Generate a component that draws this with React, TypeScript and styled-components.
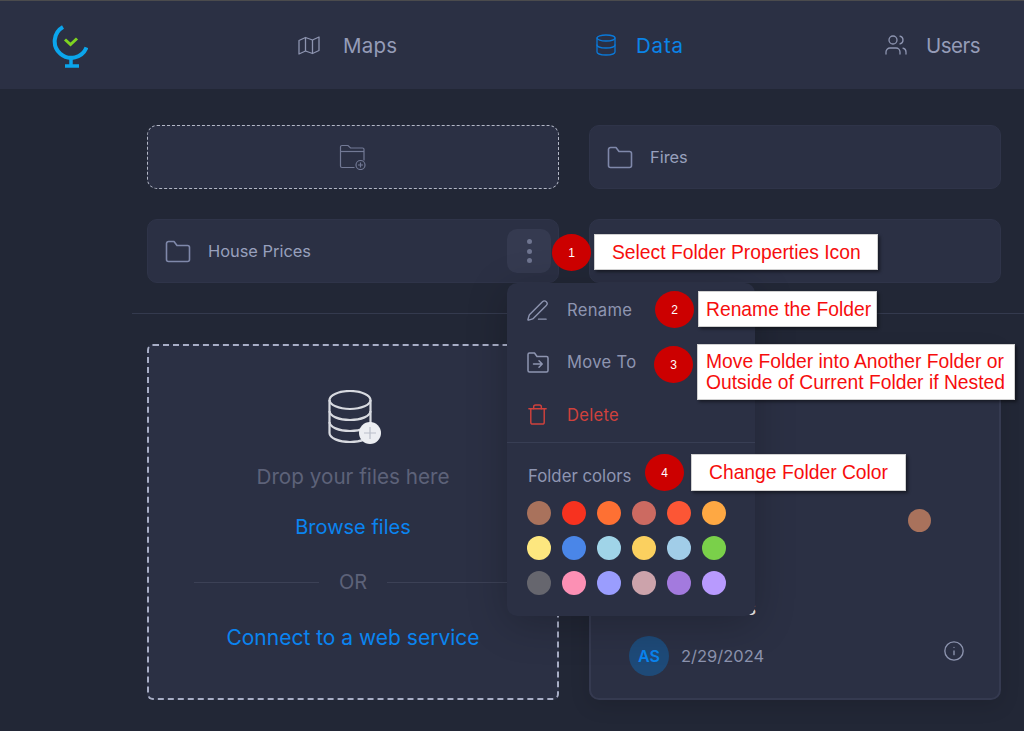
import { ReactNode } from "react";
import styled, { createGlobalStyle } from "styled-components";
import { Database, Users, Info, Trash, PenLine } from "lucide-react";

const GlobalStyle = createGlobalStyle`
  html, body {
    margin: 0;
    padding: 0;
    background: #222736;
    overflow: hidden;
  }
  * {
    box-sizing: border-box;
  }
`;

const Page = styled.div`
  position: relative;
  width: 1024px;
  height: 731px;
  overflow: hidden;
  font-family: Inter, "Open Sans", sans-serif;
  color: #9aa2bf;
`;

const Header = styled.header`
  display: grid;
  grid-template-columns: 246px 296px 290px auto;
  align-items: center;
  height: 89px;
  padding-left: 52px;
  background: #2b3044;
  border-top: 1px solid #4b4b4d;
`;

const Logo = styled.svg`
  display: block;
  width: 36px;
  height: 44px;
  margin-top: 2px;
`;

const NavItem = styled.a<{ $active?: boolean }>`
  display: flex;
  align-items: center;
  font-size: 20.5px;
  color: ${(p) => (p.$active ? "#0a84e8" : "#959cb8")};
  svg {
    flex: none;
    color: ${(p) => (p.$active ? "#0a78d8" : "#8d94b0")};
  }
`;

const NavLabel = styled.span<{ $gap: number; $spacing: number }>`
  margin-left: ${(p) => p.$gap}px;
  letter-spacing: ${(p) => p.$spacing}px;
`;

const Main = styled.main`
  padding: 36px 0 0 132px;
`;

const Section = styled.div`
  display: grid;
  grid-template-columns: 412px 412px;
  gap: 30px;
  padding-left: 15px;
`;

const FolderCard = styled.div`
  display: flex;
  align-items: center;
  gap: 17px;
  height: 64px;
  padding: 0 17px;
  background: #2b3044;
  border: 1px solid #2f3449;
  border-radius: 10px;
  font-size: 16.4px;
  color: #98a0bd;
`;

const NewFolderCard = styled(FolderCard)`
  justify-content: center;
  background: #2b3044;
  border: 1px dashed #b3b7c6;
  padding: 0;
`;

const Divider = styled.hr`
  height: 1px;
  margin: 30px 0 30px;
  border: 0;
  background: #343a4e;
`;

const DropZone = styled.div`
  display: flex;
  flex-direction: column;
  align-items: center;
  height: 356px;
  padding-top: 44px;
  background: #2b3044;
  border: 2px dashed #a8aec6;
  border-radius: 6px;
`;

const DropGraphic = styled.svg`
  display: block;
  margin-left: 3px;
`;

const DropText = styled.div`
  margin-top: 17px;
  font-size: 20.7px;
  line-height: 28px;
  color: #5d6279;
`;

const LinkText = styled.a<{ $top: number; $size: number }>`
  margin-top: ${(p) => p.$top}px;
  font-size: ${(p) => p.$size}px;
  line-height: 28px;
  color: #0a84f0;
`;

const OrRow = styled.div`
  display: flex;
  align-items: center;
  gap: 20px;
  width: 318px;
  margin-top: 27px;
  font-size: 20px;
  line-height: 28px;
  color: #5d6279;
  &::before,
  &::after {
    content: "";
    flex: 1;
    height: 1px;
    background: #3c4156;
  }
`;

const MapCard = styled.article`
  position: relative;
  display: flex;
  flex-direction: column;
  justify-content: flex-end;
  height: 356px;
  padding: 0 34px 22px 38px;
  background: #2b3044;
  border: 2px solid #353a50;
  border-radius: 10px;
  box-shadow: 0 6px 20px rgba(0, 0, 0, 0.12);
`;

const MapPin = styled.span`
  position: absolute;
  left: 317px;
  top: 163px;
  width: 23px;
  height: 23px;
  border-radius: 50%;
  background: #a9725c;
`;

const CardTitle = styled.div`
  margin-bottom: 15px;
  font-size: 18.7px;
  line-height: 24px;
  font-weight: 500;
  color: #e8eaf2;
`;

const CardFooter = styled.div`
  display: flex;
  align-items: center;
  gap: 12px;
  font-size: 16.5px;
  color: #8c93ae;
`;

const Avatar = styled.span`
  display: flex;
  align-items: center;
  justify-content: center;
  width: 40px;
  height: 40px;
  border-radius: 50%;
  background: #1e4a78;
  color: #0a84f0;
  font-size: 16px;
  font-weight: 600;
`;

const InfoButton = styled.span`
  display: flex;
  margin: -10px 0 0 auto;
  color: #8c93ae;
`;

const KebabButton = styled.div`
  position: absolute;
  left: 507px;
  top: 229px;
  display: flex;
  flex-direction: column;
  align-items: center;
  justify-content: center;
  gap: 4.5px;
  width: 44px;
  height: 44px;
  background: #353a50;
  border-radius: 10px;
`;

const Dot = styled.i`
  width: 5px;
  height: 5px;
  border-radius: 50%;
  background: #6f7590;
`;

const Menu = styled.div`
  position: absolute;
  left: 507px;
  top: 283px;
  width: 248px;
  height: 333px;
  background: #2b3044;
  border-radius: 10px;
  box-shadow: 0 8px 40px rgba(0, 0, 0, 0.22);
`;

const MenuList = styled.div`
  display: flex;
  flex-direction: column;
  padding: 1px 0 1px 19px;
  border-bottom: 1px solid #383e54;
  height: 160px;
`;

const MenuItem = styled.div<{ $danger?: boolean }>`
  display: flex;
  align-items: center;
  gap: 18px;
  height: 52.5px;
  font-size: 16.6px;
  letter-spacing: 0.3px;
  color: ${(p) => (p.$danger ? "#d0413c" : "#8e95b1")};
  svg {
    flex: none;
    color: ${(p) => (p.$danger ? "#d0413c" : "#8e95b1")};
  }
`;

const MenuHeading = styled.div`
  padding: 21px 0 0 21px;
  font-size: 16.8px;
  line-height: 24px;
  color: #8e95b1;
`;

const Swatches = styled.div`
  display: grid;
  grid-template-columns: repeat(6, 24px);
  gap: 11px;
  padding: 13px 0 0 20px;
`;

const Swatch = styled.span<{ $color: string }>`
  width: 24px;
  height: 24px;
  border-radius: 50%;
  background: ${(p) => p.$color};
`;

const Callout = styled.div<{ $x: number; $y: number; $gap: number }>`
  position: absolute;
  left: ${(p) => p.$x}px;
  top: ${(p) => p.$y}px;
  display: flex;
  align-items: flex-start;
  gap: ${(p) => p.$gap}px;
`;

const Badge = styled.span<{ $top: number }>`
  display: flex;
  align-items: center;
  justify-content: center;
  flex: none;
  width: 39px;
  height: 37px;
  margin-top: ${(p) => p.$top}px;
  border-radius: 50%;
  background: #cc0000;
  color: #fff;
  font-family: "Liberation Sans", Arial, sans-serif;
  font-size: 12px;
`;

const Note = styled.div<{ $width: number; $height: number; $pad: number }>`
  display: flex;
  align-items: center;
  width: ${(p) => p.$width}px;
  height: ${(p) => p.$height}px;
  padding-left: ${(p) => p.$pad}px;
  background: #fff;
  border: 1px solid #d0d0d0;
  box-shadow: 2px 2px 3px rgba(0, 0, 0, 0.45);
  color: #f60d0d;
  font-family: "Liberation Sans", Arial, sans-serif;
  font-size: 19.3px;
  line-height: 21px;
  white-space: nowrap;
`;

const MapsIcon = () => (
  <svg width="22" height="19" viewBox="0 0 22 19" fill="none" stroke="currentColor" strokeWidth="1.3" strokeLinejoin="round">
    <path d="M1 4.500L7.500 1.500L14.500 4L21 1V14.500L14.500 17.500L7.500 15L1 18Z" />
    <path d="M7.500 1.500V15M14.500 4V17.500" />
  </svg>
);

const FolderIcon = () => (
  <svg width="26" height="24" viewBox="0 0 26 24" fill="none" stroke="#7f88aa" strokeWidth="1.6" strokeLinejoin="round">
    <path d="M1.500 4.500a2 2 0 0 1 2-2h5.500l3 4h10.500a2 2 0 0 1 2 2v12a2 2 0 0 1-2 2h-19a2 2 0 0 1-2-2z" />
  </svg>
);

const NewFolderIcon = () => (
  <svg width="28" height="26" viewBox="0 0 28 26" fill="none" stroke="#727995" strokeWidth="1.2">
    <path d="M15.500 23.500H3A1.500 1.500 0 0 1 1.500 22V3A1.500 1.500 0 0 1 3 1.500h6l2.500 2.500h12A1.500 1.500 0 0 1 25 5.500V16.500" />
    <path d="M1.500 7.500H25" />
    <circle cx="21.500" cy="21" r="4.500" />
    <path d="M21.500 18.500v5M19 21h5" />
  </svg>
);

const MoveIcon = () => (
  <svg width="23" height="21" viewBox="-1 0 23 21" fill="none" stroke="currentColor" strokeWidth="1.5" strokeLinejoin="round" strokeLinecap="round">
    <path d="M1 2.500a1.500 1.500 0 0 1 1.500-1.500h5l2.500 3.500h9.500a1.500 1.500 0 0 1 1.500 1.500v12.500a1.500 1.500 0 0 1-1.500 1.500h-17a1.500 1.500 0 0 1-1.500-1.500z" />
    <path d="M6.500 12h8.500M12 8.800l3.200 3.200-3.200 3.200" />
  </svg>
);

const DataIcon = () => (
  <DropGraphic width="54" height="56" viewBox="0 0 54 56" fill="none" stroke="#d8dae0" strokeWidth="2.2">
    <ellipse cx="22" cy="10" rx="20.500" ry="9" />
    <path d="M1.500 10v33c0 5 9.200 9 20.500 9s20.500-4 20.500-9V10" />
    <path d="M1.500 21c0 5 9.200 9 20.500 9s20.500-4 20.500-9M1.500 32c0 5 9.200 9 20.500 9s20.500-4 20.500-9" />
    <circle cx="42" cy="43" r="11" fill="#eceef2" stroke="none" />
    <path d="M42 37v12M36 43h12" stroke="#b9bec9" strokeWidth="1.200" />
  </DropGraphic>
);

const swatchColors = [
  "#a9725c", "#f7321f", "#fe7033", "#cc6a61", "#fc5635", "#fea843",
  "#fde77f", "#4a86e8", "#a0d4e8", "#fbd05f", "#a1cde8", "#7ad04a",
  "#66666e", "#fc90b4", "#9a9dfe", "#cca3ab", "#a37ade", "#b89afe",
];

type AnnotationProps = {
  x: number;
  y: number;
  gap: number;
  num: number;
  width: number;
  height: number;
  pad: number;
  badgeTop?: number;
  children: ReactNode;
};

function Annotation({ x, y, gap, num, width, height, pad, badgeTop = 0, children }: AnnotationProps) {
  return (
    <Callout $x={x} $y={y} $gap={gap}>
      <Badge $top={badgeTop}>{num}</Badge>
      <Note $width={width} $height={height} $pad={pad}>
        <span>{children}</span>
      </Note>
    </Callout>
  );
}

function App() {
  return (
    <Page>
      <GlobalStyle />
      <Header>
        <Logo viewBox="0 0 36 44" fill="none">
          <path d="M11 3A16.500 16.500 0 1 0 34.500 23.500" stroke="#0ba5ec" strokeWidth="4" />
          <path d="M19 34v7" stroke="#0ba5ec" strokeWidth="3.500" />
          <path d="M13 42h14" stroke="#0ba5ec" strokeWidth="3.500" />
          <path d="M13 15.500l5.500 5 6.500-6" stroke="#7ed321" strokeWidth="3" />
        </Logo>
        <NavItem>
          <MapsIcon />
          <NavLabel $gap={23} $spacing={0.2}>Maps</NavLabel>
        </NavItem>
        <NavItem $active>
          <Database size={24} strokeWidth={1.3} />
          <NavLabel $gap={18} $spacing={0.8}>Data</NavLabel>
        </NavItem>
        <NavItem>
          <Users size={24} strokeWidth={1.3} />
          <NavLabel $gap={18} $spacing={-0.5}>Users</NavLabel>
        </NavItem>
      </Header>

      <Main>
        <Section>
          <NewFolderCard>
            <NewFolderIcon />
          </NewFolderCard>
          <FolderCard>
            <FolderIcon />
            Fires
          </FolderCard>
          <FolderCard>
            <FolderIcon />
            House Prices
          </FolderCard>
          <FolderCard />
        </Section>
        <Divider />
        <Section>
          <DropZone>
            <DataIcon />
            <DropText>Drop your files here</DropText>
            <LinkText $top={22} $size={20}>Browse files</LinkText>
            <OrRow>OR</OrRow>
            <LinkText $top={28} $size={21}>Connect to a web service</LinkText>
          </DropZone>
          <MapCard>
            <MapPin />
            <CardTitle>Median Prices</CardTitle>
            <CardFooter>
              <Avatar>AS</Avatar>
              2/29/2024
              <InfoButton>
                <Info size={22} strokeWidth={1.500} />
              </InfoButton>
            </CardFooter>
          </MapCard>
        </Section>
      </Main>

      <KebabButton>
        <Dot />
        <Dot />
        <Dot />
      </KebabButton>

      <Menu>
        <MenuList>
          <MenuItem>
            <PenLine size={23} strokeWidth={1.400} />
            Rename
          </MenuItem>
          <MenuItem>
            <MoveIcon />
            Move To
          </MenuItem>
          <MenuItem $danger>
            <Trash size={23} strokeWidth={1.500} />
            Delete
          </MenuItem>
        </MenuList>
        <MenuHeading>Folder colors</MenuHeading>
        <Swatches>
          {swatchColors.map((color, i) => (
            <Swatch key={i} $color={color} />
          ))}
        </Swatches>
      </Menu>

      <Annotation x={552} y={234} gap={3} num={1} width={284} height={36} pad={17}>
        Select Folder Properties Icon
      </Annotation>
      <Annotation x={655} y={291} gap={4} num={2} width={179} height={36} pad={7}>
        Rename the Folder
      </Annotation>
      <Annotation x={654} y={344} gap={4} num={3} width={318} height={56} pad={8} badgeTop={2}>
        Move Folder into Another Folder or
        <br />
        Outside of Current Folder if Nested
      </Annotation>
      <Annotation x={645} y={454} gap={7} num={4} width={215} height={37} pad={17}>
        Change Folder Color
      </Annotation>
    </Page>
  );
}

export default App;
